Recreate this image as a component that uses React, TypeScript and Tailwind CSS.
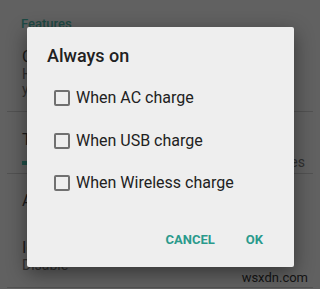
import React from "react";

const rows = ["When AC charge", "When USB charge", "When Wireless charge"];

export default function App() {
  return (
    <div
      className="relative w-[320px] h-[289px] overflow-hidden bg-[#616161]"
      style={{ fontFamily: "Roboto, 'Noto Sans', sans-serif" }}
    >
      {/* background settings list (dimmed by scrim) */}
      <div className="flex flex-col">
        <div className="pl-[21px] pt-[16px] h-[36px] text-[13px] font-medium text-[#1d4a44] leading-[16px]">
          Features
        </div>
        <div className="pl-[22px] pr-[8px] h-[75px] flex flex-col pt-[11px]">
          <div className="text-[16px] leading-[20px] text-[#1b1b1b]">Charging</div>
          <div className="text-[14px] leading-[15px] text-[#303030]">Hides the screen when the device is</div>
          <div className="text-[14px] leading-[15px] text-[#303030]">your pocket</div>
        </div>
        <div className="mx-[7px] h-px bg-[#525252]" />
        <div className="pl-[22px] pr-[15px] h-[61px] flex flex-col pt-[18px]">
          <div className="text-[16px] leading-[20px] text-[#1b1b1b]">Timeout</div>
          <div className="flex items-center justify-between mt-[5px]">
            <div className="w-[5px] h-[4px] bg-[#1f4f48]" />
            <div className="text-[14px] leading-[15px] text-[#303030]">minutes</div>
          </div>
        </div>
        <div className="mx-[7px] h-px bg-[#525252]" />
        <div className="pl-[22px] h-[60px] pt-[17px] text-[16px] leading-[20px] text-[#1b1b1b]">Always on</div>
        <div className="pl-[22px] h-[53px] pt-[4px] flex flex-col">
          <div className="text-[16px] leading-[20px] text-[#1b1b1b]">Ignore</div>
          <div className="text-[14px] leading-[15px] text-[#303030]">Disable</div>
        </div>
        <div className="mx-[7px] h-px bg-[#525252]" />
      </div>

      <div className="absolute right-[12px] top-[270px] text-[13px] leading-[16px] text-[#141414]">
        wsxdn.com
      </div>

      {/* dialog */}
      <div className="absolute left-[27px] top-[27px] w-[267px] h-[240px] bg-[#eeeeee] rounded-[2px] shadow-[0_6px_20px_rgba(0,0,0,0.45)] flex flex-col">
        <div className="pl-[20px] pt-[17px] text-[18px] leading-[24px] font-medium text-[#212121]">
          Always on
        </div>
        <div className="flex flex-col mt-[9px]">
          {rows.map((r) => (
            <div key={r} className="flex items-center h-[42.5px] pl-[27px]">
              <div className="w-[16px] h-[16px] border-2 border-[#707070] rounded-[2px]" />
              <span className="ml-[6px] text-[16px] leading-[20px] text-[#212121]">{r}</span>
            </div>
          ))}
        </div>
        <div className="flex justify-end items-center mt-auto mb-[18px] pr-[31px] gap-[31px]">
          <span className="text-[13px] font-bold text-[#2a9a8c]">CANCEL</span>
          <span className="text-[13px] font-bold text-[#2a9a8c]">OK</span>
        </div>
      </div>
    </div>
  );
}
